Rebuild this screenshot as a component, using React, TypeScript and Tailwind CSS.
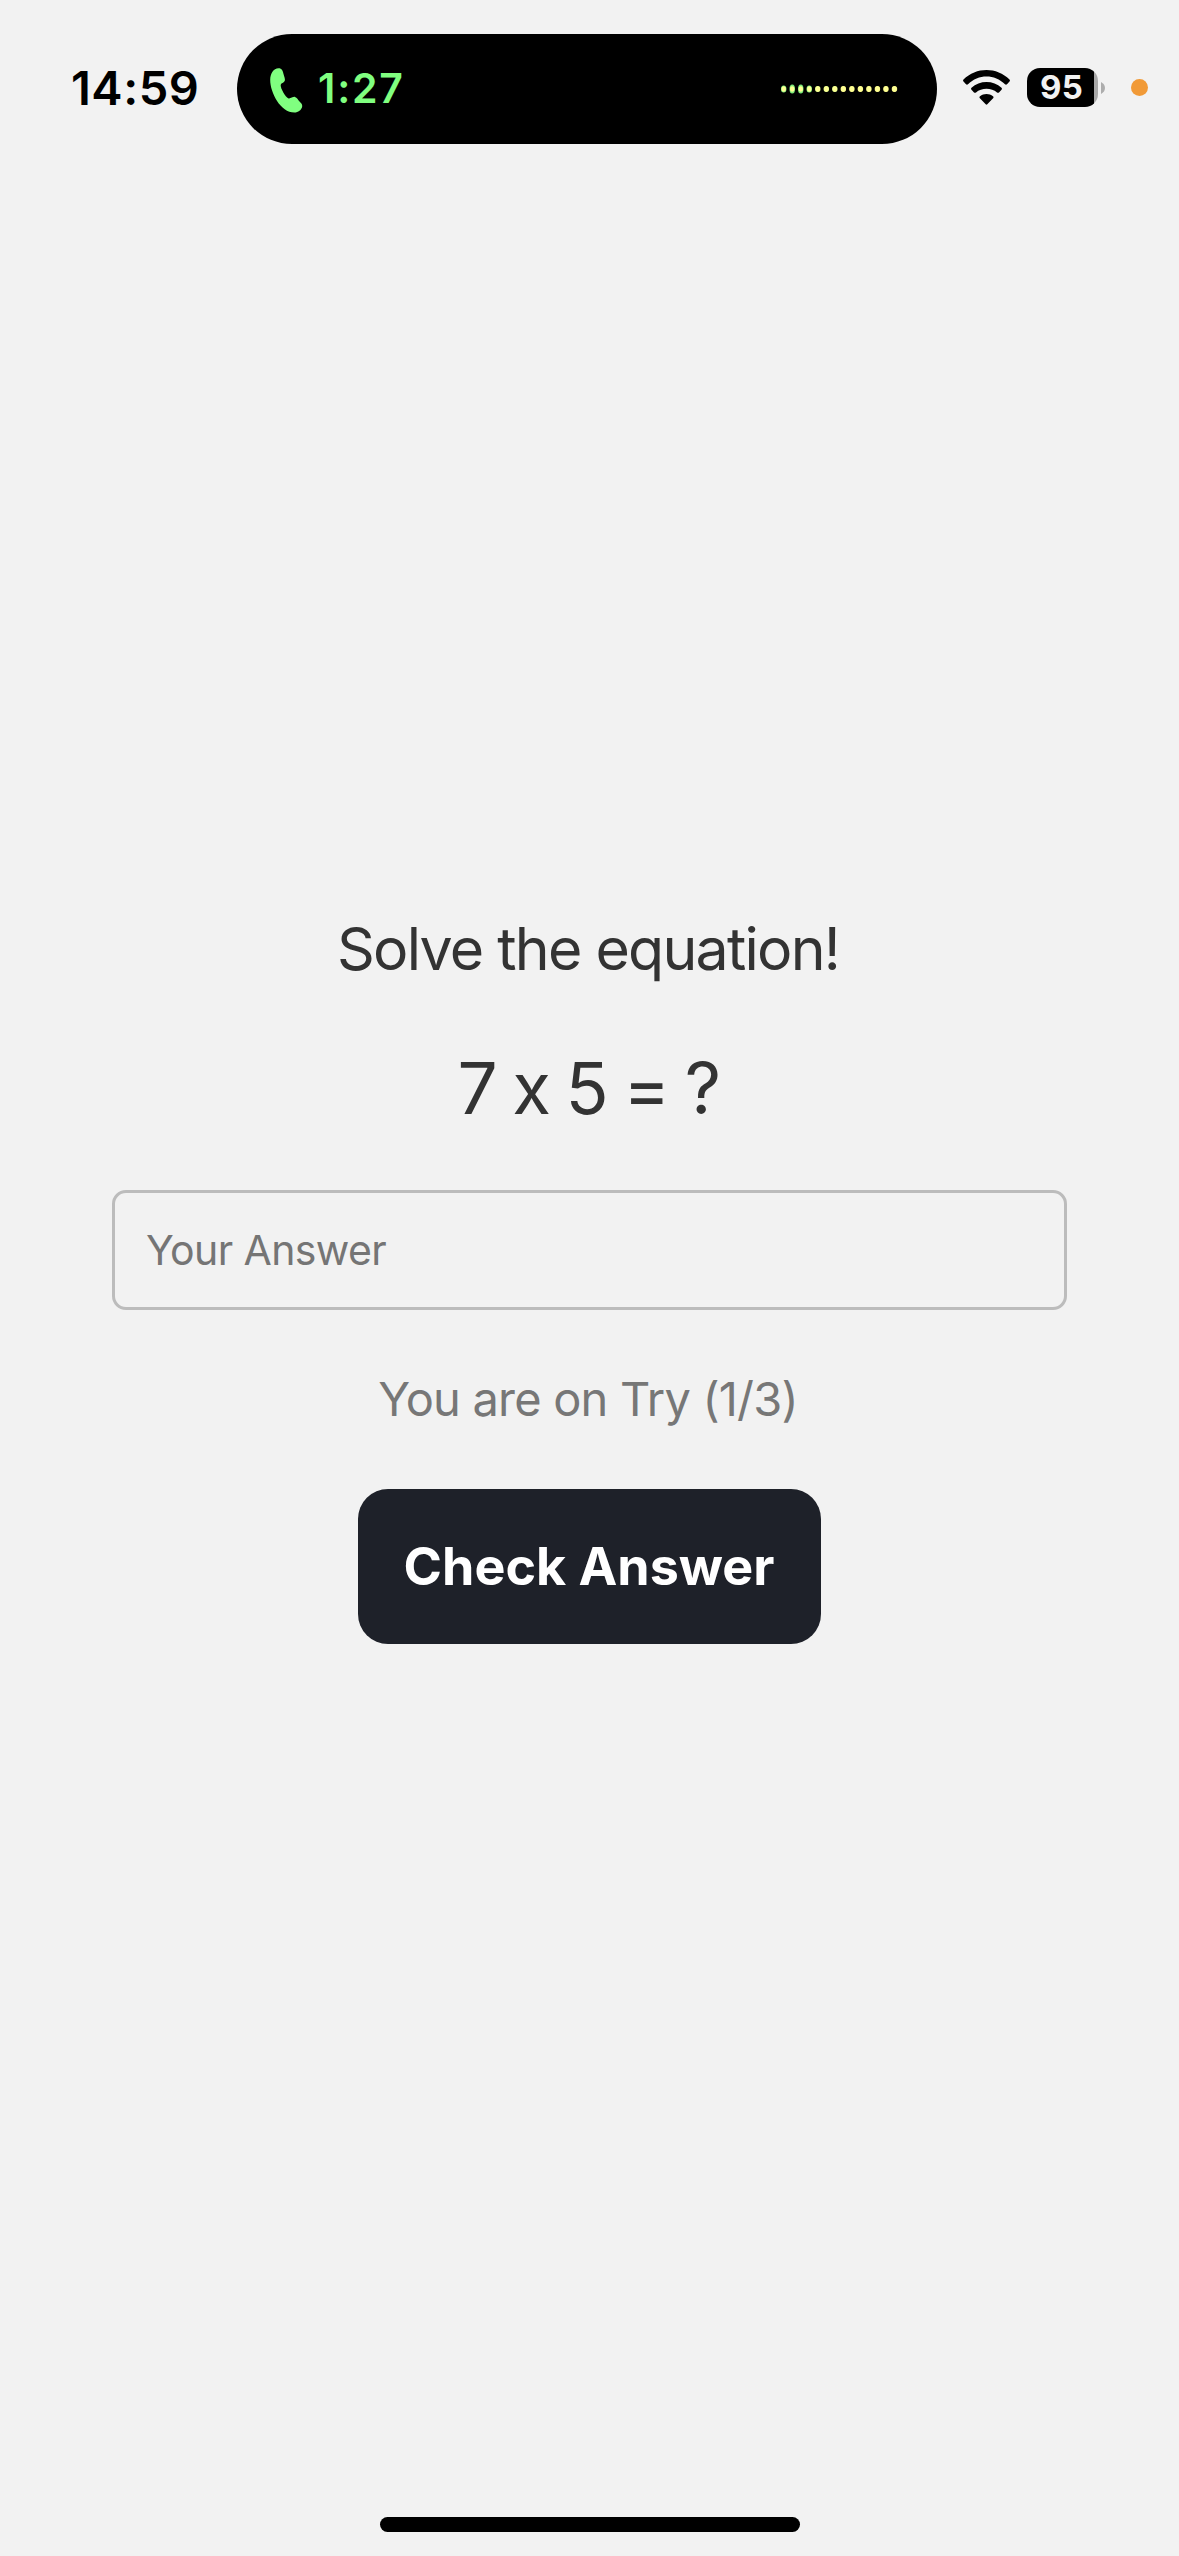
const levels = [7, 9, 9, 7, 6, 6, 6, 6, 6, 6, 6, 6, 6, 6];

function PhoneIcon() {
  return (
    <svg className="mt-[3px] ml-[33px] h-[45px] w-[33px] shrink-0" viewBox="0 0 33 45" fill="#80ff80">
      <path d="M.2 12C.2 5.500 3.500 .3 8.500 .3C12 .3 12.800 3 13.500 6C14.200 9 15.400 11 14.800 12.800C14.200 14.600 10.900 15.200 10.700 17.200C10.400 20.200 15.500 29 18.200 30.300C20.200 31.200 22.800 28.500 25 28.900C27 29.300 28 31.800 29.500 33.500C31.200 35.300 32.500 36.300 32.200 38.500C31.700 41.800 28 44.600 24.500 44.600C10.500 44.600 .2 24.500 .2 12Z" />
    </svg>
  );
}

function AudioLevels() {
  return (
    <svg className="mr-[39px] mb-[1px] ml-auto h-[12px] w-[118px] shrink-0" viewBox="0 0 118 12">
      {levels.map((h, i) => (
        <g key={i}>
          <ellipse cx={3.7 + i * 8.52} cy="6" rx="2.75" ry={h / 2} fill={i < 4 ? "#7fee7a" : i < 7 ? "#d8fb85" : "#f4f482"} />
          <ellipse cx={3.7 + i * 8.52} cy="6" rx="2.2" ry="2.7" fill="#ffff94" />
        </g>
      ))}
    </svg>
  );
}

function WifiIcon() {
  return (
    <svg className="ml-[26px] h-[35px] w-[47px] shrink-0" viewBox="0 0 47 35" fill="#000">
      <path d="M.5 11.600C-.1 11 -.1 10.200 .5 9.600C13 -3.200 34 -3.200 46.500 9.600C47.100 10.200 47.100 11 46.500 11.600L44 14.200C43.400 14.800 42.600 14.800 42 14.200C31.800 3.800 15.200 3.800 5 14.200C4.400 14.800 3.600 14.800 3 14.200Z" />
      <path d="M8.500 19.800C7.900 19.200 7.900 18.400 8.500 17.800C16.500 10.100 30.500 10.100 38.500 17.800C39.100 18.400 39.100 19.200 38.500 19.800L36 22.400C35.400 23 34.600 23 34 22.400C28.500 17.500 18.500 17.500 13 22.400C12.400 23 11.600 23 11 22.400Z" />
      <path d="M16.900 28.300C16.300 27.700 16.300 26.900 17 26.300C20.700 23.300 26.300 23.300 30 26.300C30.700 26.900 30.700 27.700 30.100 28.300L24.300 34.300C23.800 34.900 23.200 34.900 22.700 34.300Z" />
    </svg>
  );
}

function Battery() {
  return (
    <div className="ml-[17px] flex items-center">
      <div className="flex h-[39px] w-[71px] items-center overflow-hidden rounded-[13px] bg-[linear-gradient(90deg,#000_67px,#a9a9a9_67px)] pl-[13px] text-[33px] leading-none font-bold tracking-[0.3px] text-[#f2f2f2]">
        95
      </div>
      <svg className="ml-[3px] h-[12px] w-[4px]" viewBox="0 0 4 12" fill="#adadad">
        <path d="M0 0C2.500 1.300 4 3.500 4 6C4 8.500 2.500 10.700 0 12Z" />
      </svg>
    </div>
  );
}

export default function App() {
  return (
    <div className="flex h-[2556px] w-[1179px] flex-col overflow-hidden bg-[#f2f2f2] font-['Inter',sans-serif] whitespace-nowrap">
      <header className="flex h-[144px] items-start pt-[34px]">
        <div className="flex h-[108px] w-[237px] shrink-0 items-center pl-[71px] text-[47px] font-semibold tracking-[0.5px] text-black">
          14:59
        </div>
        <div className="flex h-[110px] w-[700px] shrink-0 items-center rounded-full bg-black">
          <PhoneIcon />
          <span className="mb-[2px] ml-[15px] text-[41px] leading-none font-semibold tracking-[1.8px] text-[#80ff80]">
            1:27
          </span>
          <AudioLevels />
        </div>
        <div className="flex h-[107px] items-center">
          <WifiIcon />
          <Battery />
          <div className="ml-[26px] size-[17px] rounded-full bg-[#f19a37]" />
        </div>
      </header>

      <main className="flex flex-1 flex-col items-center">
        <h1 className="mt-[769px] pr-[3px] text-[59px] leading-[72px] tracking-[-1.75px] text-[#333]">
          Solve the equation!
        </h1>
        <p className="mt-[60px] pr-[3px] text-[71px] leading-[86px] tracking-[-2.7px] text-[#333] [font-feature-settings:'calt'_0]">
          7 x 5 = ?
        </p>
        <input
          type="text"
          placeholder="Your Answer"
          className="mt-[59px] h-[120px] w-[955px] rounded-[14px] border-[3px] border-[#bcbcbc] bg-transparent pl-[31px] text-[41px] tracking-[-0.6px] text-[#333] outline-none placeholder:text-[#757575]"
        />
        <p className="mt-[60px] pr-[3px] text-[47px] leading-[58px] tracking-[-0.8px] text-[#777]">
          You are on Try (1/3)
        </p>
        <button className="mt-[61px] h-[155px] w-[463px] rounded-[30px] bg-[#1e2129] pr-[1px] text-[52px] font-bold text-white">
          Check Answer
        </button>
      </main>

      <footer className="flex h-[39px] justify-center">
        <div className="mr-[-1px] h-[15px] w-[420px] rounded-full bg-black" />
      </footer>
    </div>
  );
}
